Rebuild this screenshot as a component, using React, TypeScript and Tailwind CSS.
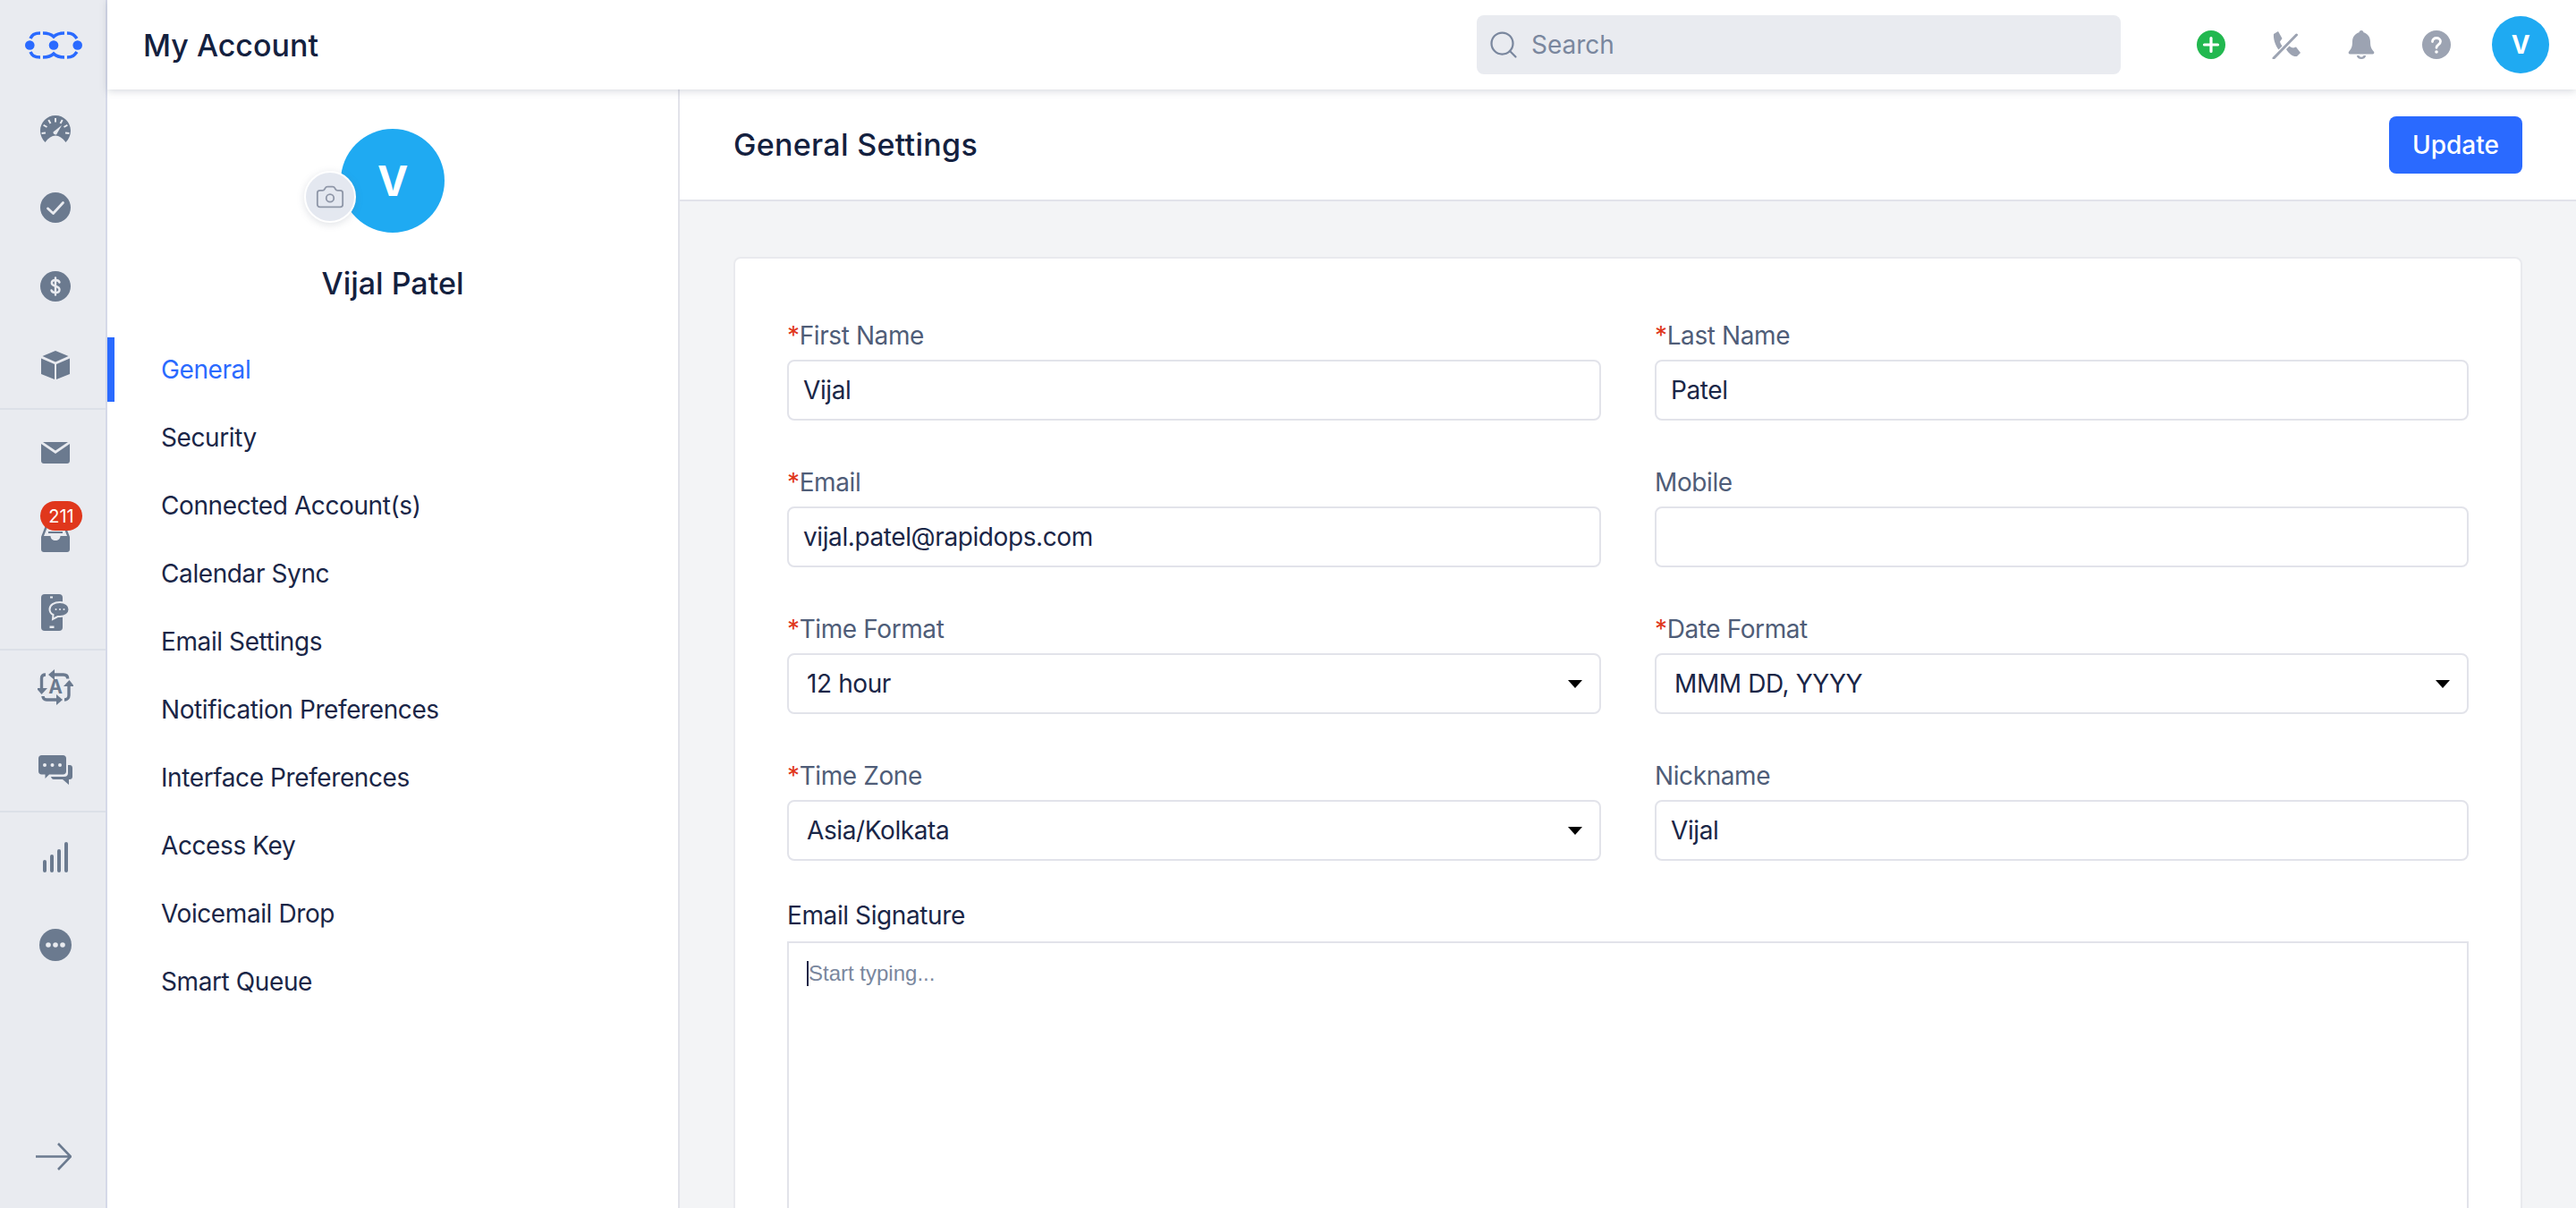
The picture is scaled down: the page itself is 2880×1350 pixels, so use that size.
import React from 'react';
import { Search, Camera } from 'lucide-react';

const navItems = [
  'General',
  'Security',
  'Connected Account(s)',
  'Calendar Sync',
  'Email Settings',
  'Notification Preferences',
  'Interface Preferences',
  'Access Key',
  'Voicemail Drop',
  'Smart Queue',
];

function Logo() {
  return (
    <svg width="64" height="31" viewBox="0 0 64 31" fill="none">
      <circle cx="5.300" cy="15.500" r="5.300" fill="#2a6aff" />
      <circle cx="32" cy="15.500" r="5.300" fill="#2a6aff" />
      <circle cx="58.700" cy="15.500" r="5.300" fill="#2a6aff" />
      <g stroke="#2a6aff" strokeWidth="3.600">
        <path d="M6 8C8 4 10 2 17 2" />
        <path d="M20 2C26 2 29 3 32 6C35 3 38 2 44 2" />
        <path d="M47 2C53 2 55 4 58 8" />
        <path d="M6 23C8 27 10 29 17 29" />
        <path d="M20 29C26 29 29 28 32 25C35 28 38 29 44 29" />
        <path d="M47 29C53 29 55 27 58 23" />
      </g>
    </svg>
  );
}

function Gauge() {
  return (
    <svg width="34" height="30" viewBox="0 0 34 30">
      <path d="M17 0C7.600 0 0 7.600 0 17C0 22 2 26.500 5.500 30C9 25 13 22.500 17 22.500C21 22.500 25 25 28.500 30C32 26.500 34 22 34 17C34 7.600 26.400 0 17 0Z" fill="#6b7a8f" />
      <path d="M17 3V7.500M22.500 9L24.750 5.100M11.500 9L9.250 5.100M26.500 13L30.400 10.750M7.500 13L3.600 10.750M28 19.500L32.400 20M6 19.500L1.600 20" stroke="#e9ebf0" strokeWidth="2" />
      <path d="M14.500 18.500L24 11L18 21.500C16.500 22 14 20.500 14.500 18.500Z" fill="#e9ebf0" />
    </svg>
  );
}

function CheckCircle() {
  return (
    <svg width="34" height="34" viewBox="0 0 34 34">
      <circle cx="17" cy="17" r="17" fill="#6b7a8f" />
      <path d="M8.500 18L14.500 23.500L25.500 11.500" fill="none" stroke="#e9ebf0" strokeWidth="2.800" strokeLinecap="round" strokeLinejoin="round" />
    </svg>
  );
}

function DollarCircle() {
  return (
    <svg width="34" height="34" viewBox="0 0 34 34">
      <circle cx="17" cy="17" r="17" fill="#6b7a8f" />
      <path d="M21.500 12.500C21 11 19.500 10 17 10C14.500 10 12.800 11.300 12.800 13.300C12.800 18 21.500 15.500 21.500 20.700C21.500 22.800 19.500 24 17 24C14.500 24 13 23 12.500 21.500M17 7.500V26.500" fill="none" stroke="#e9ebf0" strokeWidth="2.400" strokeLinecap="round" />
    </svg>
  );
}

function Box() {
  return (
    <svg width="32" height="32" viewBox="0 0 32 32" fill="#6b7a8f">
      <path d="M16 0L30.500 6L16 12.500L1.500 6Z" />
      <path d="M0 8.500L15 15V32L0 26Z" />
      <path d="M32 8.500L17 15V32L32 26Z" />
    </svg>
  );
}

function Mail() {
  return (
    <svg width="32" height="24" viewBox="0 0 32 24" fill="#6b7a8f">
      <path d="M2 0H30L16 9.500Z" />
      <path d="M0 2V21C0 22.700 1.300 24 3 24H29C30.700 24 32 22.700 32 21V2L16 13Z" />
    </svg>
  );
}

function Inbox() {
  return (
    <svg width="32" height="30" viewBox="0 0 32 30" fill="#6b7a8f">
      <path d="M5 0H27L32 13V27C32 28.700 30.700 30 29 30H3C1.300 30 0 28.700 0 27V13Z" />
      <path d="M6.500 3H25.500L29 12H21.500C21.500 15 19 17 16 17C13 17 10.500 15 10.500 12H3Z" fill="#e9ebf0" />
      <rect x="8" y="7" width="16" height="2" fill="#6b7a8f" />
    </svg>
  );
}

function PhoneChat() {
  return (
    <svg width="32" height="41" viewBox="0 0 32 41">
      <rect x="0" y="0" width="24" height="41" rx="4" fill="#6b7a8f" />
      <rect x="10" y="2.500" width="3" height="2" fill="#e9ebf0" />
      <rect x="9.500" y="35.500" width="5" height="2.500" fill="#e9ebf0" />
      <path d="M21 9C14.500 9 9.500 12 9.500 17C9.500 19.800 11 21.800 13.500 23L13 28L18.500 25H21C27 25 31.500 22 31.500 17C31.500 12 27 9 21 9Z" fill="#6b7a8f" stroke="#e9ebf0" strokeWidth="2" />
      <circle cx="16.500" cy="17" r="1" fill="#e9ebf0" />
      <circle cx="21" cy="17" r="1" fill="#e9ebf0" />
      <circle cx="25.500" cy="17" r="1" fill="#e9ebf0" />
    </svg>
  );
}

function Translate() {
  return (
    <svg width="40" height="40" viewBox="0 0 40 40" fill="none" stroke="#6b7a8f" strokeWidth="3.400">
      <path d="M17 6H29C32 6 33.700 7.500 33.700 10.500" />
      <path d="M35 17V29C35 32 33 34 30 34" />
      <path d="M22 34H10C7.500 34 6 32 6 30" />
      <path d="M4.500 22V10C4.500 7.500 6 6 9 6" />
      <path d="M19 0V12L12 6Z" fill="#6b7a8f" stroke="none" />
      <path d="M29 19L35.500 12L41 19Z" fill="#6b7a8f" stroke="none" />
      <path d="M21 28V40L28 34Z" fill="#6b7a8f" stroke="none" />
      <path d="M-1.500 21L4.500 28L11 21Z" fill="#6b7a8f" stroke="none" />
      <text x="20" y="27" textAnchor="middle" fill="#6b7a8f" stroke="none" fontSize="21" fontWeight="700" fontFamily="Inter, sans-serif">A</text>
    </svg>
  );
}

function Chats() {
  return (
    <svg width="38" height="33" viewBox="0 0 38 33">
      <path d="M3.500 0H27.500C29.500 0 31 1.500 31 3.500V18C31 20 29.500 21.500 27.500 21.500H12L7.500 26V21.500H3.500C1.500 21.500 0 20 0 18V3.500C0 1.500 1.500 0 3.500 0Z" fill="#6b7a8f" />
      <circle cx="7" cy="11" r="2" fill="#e9ebf0" />
      <circle cx="15.500" cy="11" r="2" fill="#e9ebf0" />
      <circle cx="24" cy="11" r="2" fill="#e9ebf0" />
      <path d="M33 11H35C36.700 11 38 12.300 38 14V24C38 25.700 36.700 27 35 27H34V33L27 27H17C15.500 27 14.500 26 14 24H29C31.500 24 33 22.500 33 20Z" fill="#6b7a8f" />
    </svg>
  );
}

function Bars() {
  return (
    <svg width="28" height="34" viewBox="0 0 28 34" fill="#6b7a8f">
      <rect x="0" y="20" width="4" height="14" rx="2" />
      <rect x="8" y="14" width="4" height="20" rx="2" />
      <rect x="16" y="8" width="4" height="26" rx="2" />
      <rect x="24" y="0" width="4" height="34" rx="2" />
    </svg>
  );
}

function More() {
  return (
    <svg width="36" height="36" viewBox="0 0 36 36">
      <circle cx="18" cy="18" r="18" fill="#6b7a8f" />
      <circle cx="10" cy="18" r="2.800" fill="#e9ebf0" />
      <circle cx="18" cy="18" r="2.800" fill="#e9ebf0" />
      <circle cx="26" cy="18" r="2.800" fill="#e9ebf0" />
    </svg>
  );
}

function Arrow() {
  return (
    <svg width="40" height="31" viewBox="0 0 40 31" fill="none" stroke="#6b7a8f" strokeWidth="2.600">
      <path d="M0 15.500H38.500M25 1L39 15.500L25 30" />
    </svg>
  );
}

function AddCircle() {
  return (
    <svg width="32" height="32" viewBox="0 0 32 32">
      <circle cx="16" cy="16" r="16" fill="#22b84f" />
      <path d="M16 8.500V23.500M8.500 16H23.500" stroke="#fff" strokeWidth="3.200" strokeLinecap="round" />
    </svg>
  );
}

function PhoneOff() {
  return (
    <svg width="32" height="32" viewBox="0 0 32 32" fill="#9ca3b2">
      <path d="M2 4L7 1L11.500 9L9 12.500C9.500 14.500 10.500 16 11.500 17.500L7.500 21.500C3.500 16.500 1.500 9 2 4Z" />
      <path d="M16 21L19.500 17.500C21 18.500 22.500 19.500 24 19.500L27 18.500L32 25L28 29C23 29.500 19 26 16 21Z" />
      <path d="M2 31L27.500 5" stroke="#9ca3b2" strokeWidth="3" strokeLinecap="round" />
    </svg>
  );
}

function Bell() {
  return (
    <svg width="30" height="32" viewBox="0 0 30 32" fill="#9ca3b2">
      <path d="M15 0C16.500 0 17.500 1 17.500 2.300C22 3.500 25 7.500 25 12.500C25 18.500 26.500 21 28.800 23.500C30 24.800 29.200 26.500 27.500 26.500H2.500C0.800 26.500 0 24.800 1.200 23.500C3.500 21 5 18.500 5 12.500C5 7.500 8 3.500 12.500 2.300C12.500 1 13.500 0 15 0Z" />
      <path d="M10 28H20C20 30.500 17.800 32 15 32C12.200 32 10 30.500 10 28ZM12.500 28C12.800 29 13.800 29.700 15 29.700C16.200 29.700 17.200 29 17.500 28Z" fillRule="evenodd" />
    </svg>
  );
}

function HelpCircle() {
  return (
    <svg width="32" height="32" viewBox="0 0 32 32">
      <circle cx="16" cy="16" r="16" fill="#9ca3b2" />
      <path d="M11.500 12.500C11.500 10 13.500 8.500 16 8.500C18.500 8.500 20.500 10 20.500 12.300C20.500 16 16 15.800 16 19.300" fill="none" stroke="#fff" strokeWidth="2.800" strokeLinecap="round" />
      <circle cx="16" cy="24" r="1.800" fill="#fff" />
    </svg>
  );
}

function RailButton({ children, className }: { children: React.ReactNode; className: string }) {
  return <div className={`flex items-center justify-center ${className}`}>{children}</div>;
}

function Label({ text, required }: { text: string; required?: boolean }) {
  return (
    <div className="h-[28px] text-[28px] leading-[28px] text-[#4f5d78]">
      {required && <span className="text-[#e0371c]">*</span>}
      {text}
    </div>
  );
}

function TextField({ label, value, required }: { label: string; value: string; required?: boolean }) {
  return (
    <div className="flex flex-col gap-[13px]">
      <Label text={label} required={required} />
      <div className="flex h-[68px] items-center rounded-[8px] border-2 border-[#e2e3ea] bg-white px-[16px] text-[28px] text-[#1a2647]">
        {value}
      </div>
    </div>
  );
}

function SelectField({ label, value, required }: { label: string; value: string; required?: boolean }) {
  return (
    <div className="flex flex-col gap-[13px]">
      <Label text={label} required={required} />
      <div className="flex h-[68px] items-center justify-between rounded-[8px] border-2 border-[#e2e3ea] bg-white pl-[20px] pr-[19px] text-[28px] text-[#1a2647]">
        <span>{value}</span>
        <svg width="16" height="9" viewBox="0 0 16 9">
          <path d="M0 0H16L8 9Z" fill="#000" />
        </svg>
      </div>
    </div>
  );
}

export default function App() {
  return (
    <div className="flex h-[1350px] w-[2880px] overflow-hidden bg-white font-['Inter',sans-serif] tracking-[-0.4px]">
      {/* Left rail */}
      <aside className="flex w-[120px] shrink-0 flex-col border-r-2 border-[#d5d9e8] bg-[#e9ebf0]">
        <RailButton className="h-[100px] pl-[2px]"><Logo /></RailButton>
        <div className="flex flex-col border-b-2 border-[#dce0e8]">
          <RailButton className="h-[88px] pl-[6px]"><Gauge /></RailButton>
          <RailButton className="h-[88px] pl-[6px]"><CheckCircle /></RailButton>
          <RailButton className="h-[88px] pl-[6px]"><DollarCircle /></RailButton>
          <RailButton className="h-[92px] pl-[6px] pb-[4px]"><Box /></RailButton>
        </div>
        <div className="flex flex-col border-b-2 border-[#dce0e8]">
          <RailButton className="h-[96px] pl-[6px]"><Mail /></RailButton>
          <RailButton className="relative h-[96px] pl-[6px]">
            <Inbox />
            <span className="absolute left-[45px] top-[6px] flex h-[33px] w-[47px] items-center justify-center rounded-full bg-[#e0371c] text-[20px] tracking-normal text-white">211</span>
          </RailButton>
          <RailButton className="h-[75px] pl-[6px] pb-[6px]"><PhoneChat /></RailButton>
        </div>
        <div className="flex flex-col border-b-2 border-[#dce0e8]">
          <RailButton className="h-[82px] pl-[6px]"><Translate /></RailButton>
          <RailButton className="h-[97px] pl-[6px] pt-[5px]"><Chats /></RailButton>
        </div>
        <RailButton className="h-[100px] pl-[6px]"><Bars /></RailButton>
        <RailButton className="h-[95px] pl-[6px]"><More /></RailButton>
        <RailButton className="mt-auto mb-[12px] h-[92px] pl-[2px]"><Arrow /></RailButton>
      </aside>

      <div className="flex min-w-0 flex-1 flex-col">
        {/* Top bar */}
        <header className="relative z-10 flex h-[100px] shrink-0 items-center bg-white pl-[40px] pr-[30px] shadow-[0_2px_8px_rgba(100,110,130,0.25)]">
          <h1 className="text-[34px] font-medium tracking-normal text-[#14213f]">My Account</h1>
          <div className="ml-auto flex h-[66px] w-[720px] items-center gap-[13px] rounded-[8px] bg-[#e9ebf0] pl-[12px]">
            <Search size={36} strokeWidth={1.5} className="text-[#7a879e]" />
            <span className="text-[28px] tracking-normal text-[#7a879e]">Search</span>
          </div>
          <div className="ml-[59px] flex items-center">
            <span className="flex w-[84px] justify-center"><AddCircle /></span>
            <span className="flex w-[84px] justify-center"><PhoneOff /></span>
            <span className="flex w-[84px] justify-center"><Bell /></span>
            <span className="flex w-[84px] justify-center"><HelpCircle /></span>
            <span className="ml-[20px] flex h-[64px] w-[64px] items-center justify-center rounded-full bg-[#1faaf2] text-[28px] font-bold text-white">V</span>
          </div>
        </header>

        <div className="flex min-h-0 flex-1">
          {/* Settings nav */}
          <nav className="flex w-[640px] shrink-0 flex-col border-r-2 border-[#e2e3ea] bg-white">
            <div className="flex flex-col items-center pt-[44px]">
              <div className="relative flex h-[116px] w-[116px] items-center justify-center rounded-full bg-[#1faaf2] text-[46px] font-bold text-white">
                V
                <span className="absolute left-[-41px] top-[47px] flex h-[58px] w-[58px] items-center justify-center rounded-full border-2 border-white bg-[#e4e8f0] shadow-[0_2px_8px_rgba(100,110,130,0.2)]">
                  <Camera size={34} strokeWidth={1.3} className="text-[#8f97a8]" />
                </span>
              </div>
              <div className="mt-[32px] text-[34px] font-medium leading-[50px] tracking-normal text-[#14213f]">Vijal Patel</div>
            </div>
            <ul className="mt-[33px] flex flex-col">
              {navItems.map((item, i) => (
                <li
                  key={item}
                  className={`my-[2px] flex h-[72px] items-center text-[28px] ${
                    i === 0
                      ? 'border-l-[8px] border-[#2a6aff] pl-[52px] text-[#2a6aff]'
                      : 'pl-[60px] text-[#1a2647]'
                  }`}
                >
                  {item}
                </li>
              ))}
            </ul>
          </nav>

          {/* Main */}
          <main className="flex min-w-0 flex-1 flex-col bg-[#f3f4f6]">
            <div className="flex h-[125px] shrink-0 items-center justify-between border-b-2 border-[#e2e3ea] bg-white px-[60px]">
              <h2 className="text-[34px] font-medium tracking-[0.3px] text-[#14213f]">General Settings</h2>
              <button className="h-[64px] w-[149px] rounded-[8px] bg-[#2a6aff] text-[28px] font-medium tracking-normal text-white">Update</button>
            </div>
            <div className="flex-1 overflow-hidden px-[60px] pt-[62px]">
              <div className="rounded-[8px] border-2 border-[#e9eaee] bg-white px-[58px] pt-[72px] pb-[60px]">
                <div className="grid grid-cols-2 gap-x-[60px] gap-y-[55px]">
                  <TextField label="First Name" value="Vijal" required />
                  <TextField label="Last Name" value="Patel" required />
                  <TextField label="Email" value="vijal.patel@rapidops.com" required />
                  <TextField label="Mobile" value="" />
                  <SelectField label="Time Format" value="12 hour" required />
                  <SelectField label="Date Format" value="MMM DD, YYYY" required />
                  <SelectField label="Time Zone" value="Asia/Kolkata" required />
                  <TextField label="Nickname" value="Vijal" />
                </div>
                <div className="mt-[47px] h-[28px] text-[28px] leading-[28px] text-[#1a2647]">Email Signature</div>
                <div className="mt-[15px] h-[420px] border-2 border-[#e2e3ea] pl-[20px] pt-[20px]">
                  <div className="w-fit border-l-2 border-[#1a2647] font-['Liberation_Sans',sans-serif] text-[24px] leading-[28px] tracking-normal text-[#7a879e]">Start typing...</div>
                </div>
              </div>
            </div>
          </main>
        </div>
      </div>
    </div>
  );
}
